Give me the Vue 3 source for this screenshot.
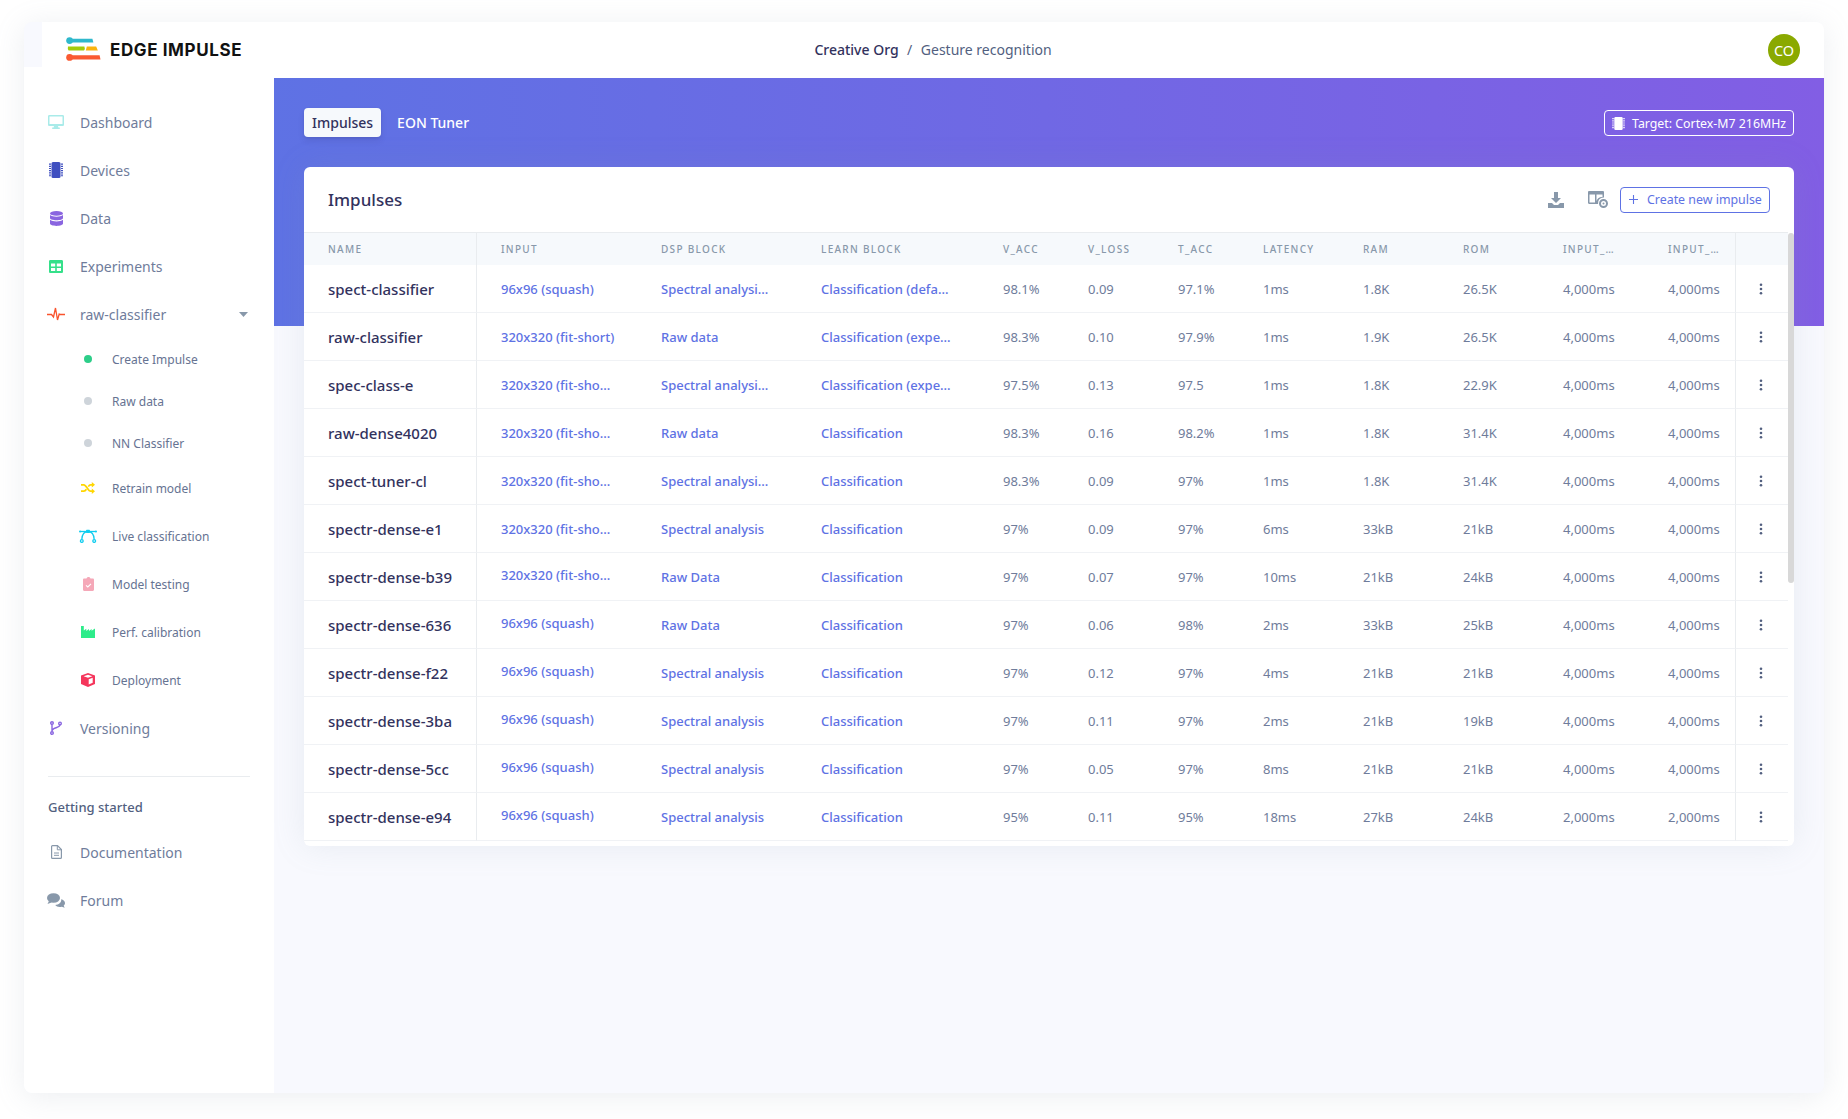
<script setup>
const nav = [
  { label: 'Dashboard', icon: 'desktop' },
  { label: 'Devices', icon: 'chip' },
  { label: 'Data', icon: 'db' },
  { label: 'Experiments', icon: 'table' },
  { label: 'raw-classifier', icon: 'pulse', caret: true }
]
const subs = [
  { label: 'Create Impulse', dot: 'green' },
  { label: 'Raw data', dot: 'grey' },
  { label: 'NN Classifier', dot: 'grey' },
  { label: 'Retrain model', icon: 'shuffle' },
  { label: 'Live classification', icon: 'bezier' },
  { label: 'Model testing', icon: 'clip' },
  { label: 'Perf. calibration', icon: 'industry' },
  { label: 'Deployment', icon: 'cube' }
]
const heads = ['Name', 'Input', 'DSP block', 'Learn block', 'V_ACC', 'V_LOSS', 'T_ACC', 'Latency', 'RAM', 'ROM', 'INPUT_…', 'INPUT_…']
const sq = '96x96 (squash)'
const fs = '320x320 (fit-sho…'
const sa = 'Spectral analysis'
const st = 'Spectral analysi…'
const cl = 'Classification'
const rows = [
  ['spect-classifier', sq, st, 'Classification (defa…', '98.1%', '0.09', '97.1%', '1ms', '1.8K', '26.5K', '4,000ms', 0],
  ['raw-classifier', '320x320 (fit-short)', 'Raw data', 'Classification (expe…', '98.3%', '0.10', '97.9%', '1ms', '1.9K', '26.5K', '4,000ms', 0],
  ['spec-class-e', fs, st, 'Classification (expe…', '97.5%', '0.13', '97.5', '1ms', '1.8K', '22.9K', '4,000ms', 0],
  ['raw-dense4020', fs, 'Raw data', cl, '98.3%', '0.16', '98.2%', '1ms', '1.8K', '31.4K', '4,000ms', 0],
  ['spect-tuner-cl', fs, st, cl, '98.3%', '0.09', '97%', '1ms', '1.8K', '31.4K', '4,000ms', 0],
  ['spectr-dense-e1', fs, sa, cl, '97%', '0.09', '97%', '6ms', '33kB', '21kB', '4,000ms', 0],
  ['spectr-dense-b39', fs, 'Raw Data', cl, '97%', '0.07', '97%', '10ms', '21kB', '24kB', '4,000ms', 1],
  ['spectr-dense-636', sq, 'Raw Data', cl, '97%', '0.06', '98%', '2ms', '33kB', '25kB', '4,000ms', 1],
  ['spectr-dense-f22', sq, sa, cl, '97%', '0.12', '97%', '4ms', '21kB', '21kB', '4,000ms', 1],
  ['spectr-dense-3ba', sq, sa, cl, '97%', '0.11', '97%', '2ms', '21kB', '19kB', '4,000ms', 1],
  ['spectr-dense-5cc', sq, sa, cl, '97%', '0.05', '97%', '8ms', '21kB', '21kB', '4,000ms', 1],
  ['spectr-dense-e94', sq, sa, cl, '95%', '0.11', '95%', '18ms', '27kB', '24kB', '2,000ms', 1]
]
</script>

<template>
  <div class="page">
    <div class="window">
      <header class="topbar">
        <div class="brand">
          <svg class="logo" width="36" height="26" viewBox="0 0 36 26">
            <circle cx="3.600" cy="3.600" r="3.400" fill="#2fb8cc" />
            <path d="M3 1.800h23.400l1 3.600H3z" fill="#2fb8cc" />
            <path d="M2 9.600h16.400q1 2-.4 4H2.600q-1.200-2-.6-4z" fill="#a3cc0a" />
            <path d="M20.800 9.600h9.400l1.600 4h-12z" fill="#fbb40c" />
            <circle cx="3.600" cy="20.400" r="3.400" fill="#fa5a32" />
            <path d="M3 18.200h30.600l.9 4.200H3z" fill="#fa5a32" />
          </svg>
          <span class="wordmark">EDGE IMPULSE</span>
        </div>
        <div class="crumbs"><b>Creative Org</b><i>/</i><span>Gesture recognition</span></div>
        <div class="user"><span class="avatar">CO</span></div>
      </header>

      <div class="body">
        <aside class="sidebar">
          <a v-for="n in nav" :key="n.label" class="item">
            <span class="ico">
              <svg v-if="n.icon === 'desktop'" width="16" height="14" viewBox="0 0 16 14"><path fill="#a9ebe9" fill-rule="evenodd" d="M1.300 0h13.400C15.400 0 16 .6 16 1.300v8.400c0 .7-.6 1.300-1.300 1.300H10l.4 1.600h1.400v1.400H4.200v-1.400h1.400L6 11H1.300C.6 11 0 10.400 0 9.700V1.300C0 .6.600 0 1.300 0zM1.500 1.500v7.500h13V1.500z"/></svg>
              <svg v-else-if="n.icon === 'chip'" width="14" height="16" viewBox="0 0 14 16"><rect x="2.500" y="0" width="9" height="16" rx="1.500" fill="#3f4fc0"/><path stroke="#3f4fc0" stroke-width="2" stroke-dasharray="1.200 1" fill="none" d="M1 1.500V15M13 1.500V15"/></svg>
              <svg v-else-if="n.icon === 'db'" width="13" height="15" viewBox="0 0 13 15"><g fill="#8a65e0"><ellipse cx="6.500" cy="2.400" rx="6.500" ry="2.400"/><path d="M0 4.100c1.400 1.300 3.900 1.700 6.500 1.700S11.600 5.400 13 4.100v2.900c0 1.300-2.900 2.300-6.500 2.300S0 8.300 0 7z"/><path d="M0 8.800c1.400 1.300 3.900 1.700 6.500 1.700s5.100-.4 6.500-1.700v3.800c0 1.300-2.900 2.400-6.500 2.400S0 13.900 0 12.600z"/></g></svg>
              <svg v-else-if="n.icon === 'table'" width="14" height="13" viewBox="0 0 14 13"><path fill="#35e08a" fill-rule="evenodd" d="M1.300 0h11.400c.7 0 1.300.6 1.300 1.300v10.400c0 .7-.6 1.300-1.300 1.300H1.300C.6 13 0 12.400 0 11.700V1.300C0 .6.600 0 1.300 0zM2 3.500v3h4.200v-3zM7.800 3.500v3H12v-3zM2 8v3h4.200V8zM7.800 8v3H12V8z"/></svg>
              <svg v-else width="18" height="14" viewBox="0 0 18 14"><path fill="none" stroke="#f9532d" stroke-width="1.300" d="M0 7.500h4.500L6.500 10l2-9 2 12 1.700-6 .8.500H18"/></svg>
            </span>
            <span class="label">{{ n.label }}</span>
            <svg v-if="n.caret" class="caret" width="9" height="5" viewBox="0 0 9 5"><path d="M0 0h9L4.500 5z" fill="#8898aa"/></svg>
          </a>

          <a v-for="s in subs" :key="s.label" class="sub" :class="{ short: s.dot }">
            <span class="ico">
              <span v-if="s.dot" class="dot" :class="s.dot"></span>
              <svg v-else-if="s.icon === 'shuffle'" width="14" height="12" viewBox="0 0 14 12"><g fill="none" stroke="#ffd600" stroke-width="1.700"><path d="M0 2.800h2.800c2.800 0 4 6.400 6.800 6.400H11"/><path d="M0 9.200h2.800c1.100 0 2-.9 2.600-1.900M7.300 4.600c.6-1 1.300-1.800 2.300-1.800H11"/></g><path fill="#ffd600" d="M10.800 0 14 2.800 10.800 5.600zM10.800 6.400 14 9.200 10.800 12z"/></svg>
              <svg v-else-if="s.icon === 'bezier'" width="18" height="14" viewBox="0 0 18 14"><g fill="none" stroke="#11cdef" stroke-width="1.300"><path d="M1 2.500h16"/><path d="M9 2.500C4.500 2.500 3 7 2.800 10.500M9 2.500c4.500 0 6 4.500 6.200 8"/><circle cx="2.800" cy="12" r="1.400"/><circle cx="15.200" cy="12" r="1.400"/></g><rect x="7" y=".8" width="4" height="3.200" rx=".8" fill="#11cdef"/><circle cx="1" cy="2.500" r="1" fill="#11cdef"/><circle cx="17" cy="2.500" r="1" fill="#11cdef"/></svg>
              <svg v-else-if="s.icon === 'clip'" width="11" height="14" viewBox="0 0 11 14"><path fill="#f5a8b8" d="M1.200 1.500H3.500C3.700.6 4.500 0 5.500 0s1.800.6 2 1.500h2.300c.6 0 1.200.6 1.200 1.200v10.100c0 .7-.6 1.200-1.200 1.200H1.200C.5 14 0 13.500 0 12.800V2.700c0-.6.500-1.200 1.200-1.200z"/><path fill="none" stroke="#fff" stroke-width="1.100" d="M3 8.300l1.800 1.700L8 6.800"/></svg>
              <svg v-else-if="s.icon === 'industry'" width="14" height="12" viewBox="0 0 14 12"><path fill="#2dec8a" d="M0 0h2.800v4.500L5.300 2.800v2.300l2.700-2v2l2.600-2V4.800L14 2.600V12H0z"/></svg>
              <svg v-else width="14" height="14" viewBox="0 0 14 14"><path fill="#f5365c" fill-rule="evenodd" d="M7 0l7 2.500v8.400L7 14l-7-3.100V2.500zM7 1.700 2.600 3.200 7 4.800l4.400-1.600zM7.700 6.200v5.400l4-1.800V4.700z"/></svg>
            </span>
            <span class="label">{{ s.label }}</span>
          </a>

          <a class="item">
            <span class="ico"><svg width="12" height="14" viewBox="0 0 12 14"><g fill="none" stroke="#8965e0" stroke-width="1.400"><circle cx="2" cy="2" r="1.300"/><circle cx="2" cy="12" r="1.300"/><circle cx="10" cy="2.400" r="1.300"/><path d="M2 3.500v7M10 3.800c0 3.500-8 2.400-8 6.200"/></g></svg></span>
            <span class="label">Versioning</span>
          </a>

          <hr class="divider" />
          <div class="section">Getting started</div>

          <a class="item">
            <span class="ico"><svg width="11" height="14" viewBox="0 0 11 14"><path fill="none" stroke="#8898aa" stroke-width="1.200" d="M1.500.6h5L10.400 4.500v7.900c0 .6-.5 1-1 1H1.500c-.5 0-.9-.4-.9-1V1.600c0-.6.400-1 .9-1z"/><path stroke="#8898aa" fill="none" stroke-width="1" d="M3 8h5M3 10.300h5M6.300 1v3.800h4"/></svg></span>
            <span class="label">Documentation</span>
          </a>
          <a class="item">
            <span class="ico"><svg width="18" height="15" viewBox="0 0 18 15"><g fill="#8898aa"><ellipse cx="6.500" cy="5" rx="6.500" ry="4.800"/><path d="M2 8l-1.500 3 4-1.500z"/><path d="M14.200 6.300c2.200.4 3.800 2 3.800 3.800 0 1-.5 2-1.300 2.700l1 2-2.900-1.100c-.7.200-1.400.3-2.100.3-1.900 0-3.600-.8-4.500-2 3.500 0 6.400-2.500 6-5.700z"/></g></svg></span>
            <span class="label">Forum</span>
          </a>
        </aside>

        <main class="main">
          <div class="hero">
            <div class="tabs">
              <a class="tab active">Impulses</a>
              <a class="tab">EON Tuner</a>
            </div>
            <a class="target">
              <svg width="13" height="13" viewBox="0 0 13 13"><rect x="2.300" y="0" width="8.400" height="13" rx="1.200" fill="#fff"/><path stroke="#fff" stroke-width="1.400" stroke-dasharray="1 .8" fill="none" d="M1 1v11M12 1v11"/></svg>
              <span>Target: Cortex-M7 216MHz</span>
            </a>
          </div>

          <section class="card">
            <div class="card-head">
              <h3>Impulses</h3>
              <div class="tools">
                <svg class="tool-a" width="16" height="16" viewBox="0 0 16 16"><path fill="#8898aa" d="M6 0h4v6h3L8 11 3 6h3zM0 11h4l2 2h4l2-2h4v5H0z"/></svg>
                <svg class="tool-b" width="20" height="19" viewBox="0 0 20 19"><path fill="#8898aa" fill-rule="evenodd" d="M1.200 1h13.600c.7 0 1.200.5 1.200 1.200V7.500a5.500 5.500 0 0 0-6 6.500H1.200C.5 14 0 13.500 0 12.800V2.200C0 1.500.5 1 1.200 1zM1.500 4.500v8H7v-8zM8.500 4.500v6.400A6 6 0 0 1 14.500 7V4.500z"/><path fill="#8898aa" fill-rule="evenodd" d="M15.500 9a4.500 4.500 0 1 1 0 9 4.500 4.500 0 0 1 0-9zm0 2a2.500 2.500 0 1 0 0 5 2.500 2.500 0 0 0 0-5zm0 1.500a1 1 0 1 1 0 2 1 1 0 0 1 0-2z"/></svg>
                <a class="create">
                  <svg width="11" height="11" viewBox="0 0 11 11"><path stroke="#5e72e4" stroke-width="1.100" d="M5.500 1v9M1 5.500h9"/></svg>
                  <span>Create new impulse</span>
                </a>
              </div>
            </div>

            <div class="table-wrap">
              <table class="grid">
                <colgroup>
                  <col class="c-name" /><col class="c-a" /><col class="c-a" /><col class="c-learn" />
                  <col class="c-b" /><col class="c-c" /><col class="c-b" /><col class="c-d" />
                  <col class="c-d" /><col class="c-d" /><col class="c-e" /><col class="c-f" /><col />
                </colgroup>
                <thead>
                  <tr>
                    <th v-for="(h, i) in heads" :key="i">{{ h }}</th>
                    <th></th>
                  </tr>
                </thead>
                <tbody>
                  <tr v-for="r in rows" :key="r[0]">
                    <td class="name">{{ r[0] }}</td>
                    <td class="link" :class="{ lift: r[11] }">{{ r[1] }}</td>
                    <td class="link">{{ r[2] }}</td>
                    <td class="link">{{ r[3] }}</td>
                    <td>{{ r[4] }}</td>
                    <td>{{ r[5] }}</td>
                    <td>{{ r[6] }}</td>
                    <td>{{ r[7] }}</td>
                    <td>{{ r[8] }}</td>
                    <td>{{ r[9] }}</td>
                    <td>{{ r[10] }}</td>
                    <td>{{ r[10] }}</td>
                    <td class="more"><svg width="4" height="12" viewBox="0 0 4 12"><g fill="#525f7f"><circle cx="2" cy="1.800" r="1.300"/><circle cx="2" cy="6" r="1.300"/><circle cx="2" cy="10.200" r="1.300"/></g></svg></td>
                  </tr>
                </tbody>
              </table>
              <div class="scroll"><span class="thumb"></span></div>
            </div>
          </section>
        </main>
      </div>
    </div>
  </div>
</template>

<style>
html, body { margin: 0; background: #fff; }
</style>

<style scoped>
.page {
  width: 1848px;
  height: 1119px;
  box-sizing: border-box;
  padding: 22px 24px 26px;
  font-family: "Noto Sans", "Open Sans", sans-serif;
  overflow: hidden;
}
.window {
  height: 1071px;
  display: flex;
  flex-direction: column;
  background: #f8f9fe;
  border-radius: 8px;
  box-shadow: 0 4px 30px rgba(136, 152, 170, .16);
}
.topbar {
  position: relative;
  flex: none;
  height: 56px;
  margin-left: 18px;
  display: flex;
  align-items: center;
  background: #fff;
  border-top-right-radius: 8px;
}
.topbar::before {
  content: "";
  position: absolute;
  left: -18px;
  top: 45px;
  width: 18px;
  height: 11px;
  background: #fff;
}
.brand { flex: 1; display: flex; align-items: center; padding-left: 24px; }
.logo { flex: none; }
.wordmark {
  margin-left: 8px;
  font-family: Inter, "Liberation Sans", sans-serif;
  font-weight: 700;
  font-size: 17px;
  letter-spacing: .6px;
  color: #111;
  white-space: nowrap;
}
.crumbs { display: flex; align-items: center; font-size: 14px; color: #525f7f; white-space: nowrap; padding-bottom: 2px; }
.crumbs b { font-weight: 500; color: #32325d; }
.crumbs i { font-style: normal; margin: 0 8.500px; }
.user { flex: 1; display: flex; justify-content: flex-end; padding-right: 24px; }
.avatar {
  width: 32px; height: 32px; border-radius: 50%;
  background: #8aa900; color: #fff; font-size: 14.500px;
  display: flex; align-items: center; justify-content: center;
}
.body { flex: 1; min-height: 0; display: flex; }
.sidebar {
  flex: none;
  width: 250px;
  box-sizing: border-box;
  padding-top: 20px;
  background: #fff;
  border-bottom-left-radius: 8px;
}
.item { display: flex; align-items: center; height: 48px; padding: 0 24px; color: #6f7c9b; font-size: 14px; position: relative; }
.item .ico { width: 18px; margin-left: -1px; margin-right: 15px; display: flex; justify-content: center; flex: none; }
.caret { position: absolute; left: 215px; top: 22px; }
.sub { display: flex; align-items: center; height: 48px; padding-left: 55px; color: #667392; font-size: 12px; }
.sub.short { height: 42px; }
.sub .ico { width: 18px; margin-right: 15px; display: flex; justify-content: center; flex: none; }
.dot { width: 8px; height: 8px; border-radius: 50%; }
.dot.green { background: #2dce89; }
.dot.grey { background: #ced4da; }
.divider { border: 0; border-top: 1px solid #e9ecef; margin: 24px 24px 0; }
.section { margin: 21px 0 12px 24px; font-size: 13px; font-weight: 500; color: #525f7f; line-height: 18px; }
.main { flex: 1; min-width: 0; background: #f8f9fe; border-bottom-right-radius: 8px; }
.hero {
  height: 248px;
  box-sizing: border-box;
  padding: 30px 30px 0;
  display: flex;
  justify-content: space-between;
  align-items: flex-start;
  background: linear-gradient(87deg, #5e72e4, #825ee4);
}
.tabs { display: flex; }
.tab { height: 29px; padding: 0 8px; display: flex; align-items: center; font-size: 14px; font-weight: 500; color: #fff; border-radius: 4px; }
.tab.active { background: #f6f9fc; color: #32325d; box-shadow: 0 4px 6px rgba(50, 50, 93, .11), 0 1px 3px rgba(0, 0, 0, .08); margin-right: 8px; }
.target {
  margin-top: 2px;
  width: 190px;
  height: 26px; box-sizing: border-box;
  display: flex; align-items: center; gap: 7px;
  padding-left: 7px;
  border: 1px solid #fff; border-radius: 4px;
  color: #fff; font-size: 12.350px; white-space: nowrap;
}
.card {
  margin: -159px 30px 0;
  position: relative;
  background: #fff;
  border-radius: 6px;
  box-shadow: 0 0 32px rgba(136, 152, 170, .15);
  overflow: hidden;
}
.card-head { height: 65px; box-sizing: border-box; padding: 0 24px; display: flex; align-items: center; justify-content: space-between; }
.card-head h3 { margin: 0; font-size: 17px; font-weight: 500; color: #32325d; padding-bottom: 1px; }
.tools { display: flex; align-items: center; }
.tool-a { margin-right: 24px; }
.tool-b { margin-right: 12px; }
.create {
  width: 150px; height: 26px; box-sizing: border-box;
  display: flex; align-items: center; gap: 8px; padding-left: 7px;
  border: 1px solid #5e72e4; border-radius: 4px;
  color: #5e72e4; font-size: 12.400px; white-space: nowrap;
}
.table-wrap { position: relative; padding-right: 6px; height: 614px; }
.grid { width: 100%; table-layout: fixed; border-collapse: separate; border-spacing: 0; }
.c-name { width: 173px; }
.c-a { width: 160px; }
.c-learn { width: 182px; }
.c-b { width: 85px; }
.c-c { width: 90px; }
.c-d { width: 100px; }
.c-e { width: 105px; }
.c-f { width: 92px; }
th {
  height: 33px; box-sizing: border-box; padding: 0 0 0 24px;
  background: #f6f9fc;
  border-top: 1px solid #e9ecef;
  text-align: left;
  font-size: 10px; font-weight: 500; letter-spacing: 1.300px;
  text-transform: uppercase; color: #8898aa; white-space: nowrap;
}
th:first-child, td:first-child { border-right: 1px solid #e9ecef; }
th:nth-child(12), td:nth-child(12) { border-right: 1px solid #e9ecef; }
td {
  height: 48px; box-sizing: border-box; padding: 0 0 0 24px;
  border-bottom: 1px solid #f0f2f5;
  font-size: 13px; color: #6f7c9b; white-space: nowrap;
}
.name { font-size: 15px; color: #32325d; font-weight: 500; }
.link { color: #5e72e4; font-weight: 500; font-size: 13px; }
.lift { padding-bottom: 3px; }
.more { padding: 0 2px 0 0; }
.more svg { display: block; margin: 0 auto; }
.scroll { position: absolute; right: 0; top: 1px; bottom: 0; width: 6px; }
.thumb { display: block; height: 350px; background: #d8d8d8; border-radius: 3px; }
</style>
